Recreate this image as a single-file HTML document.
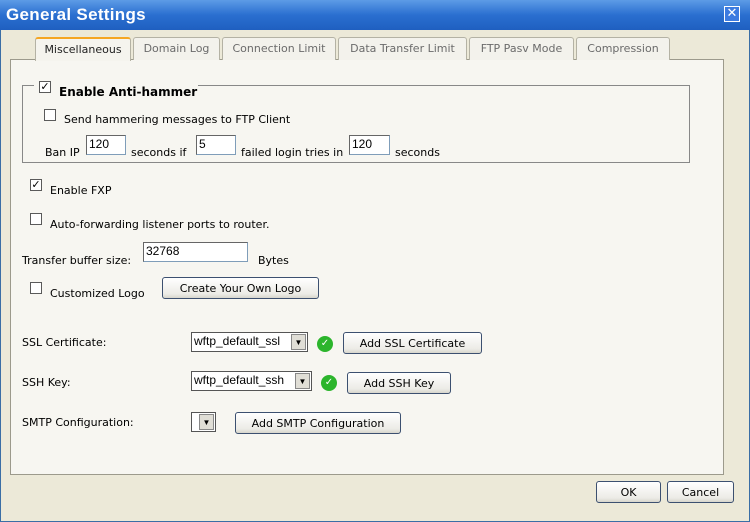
<!DOCTYPE html>
<html><head><style>
*{box-sizing:border-box;margin:0;padding:0}
body{width:750px;height:522px;background:#ece9d8;font-family:Tahoma,"DejaVu Sans",sans-serif;font-size:11px;color:#000;position:relative;overflow:hidden}
.a{position:absolute;white-space:nowrap}
#frame{position:absolute;left:0;top:0;width:750px;height:522px;border:1px solid #3a6ea5;background:#ece9d8}
#title{position:absolute;left:0;top:0;width:750px;height:30px;background:linear-gradient(#5d9be6,#2a6fd0 50%,#1f5fc0);color:#fff;font-weight:bold;font-size:17px;padding:5px 6px;font-family:"Liberation Sans",sans-serif;letter-spacing:0.3px}
#close{position:absolute;left:724px;top:6px;width:16px;height:16px;border:1px solid #fff;background:#3d7be0;color:#fff;font-size:13px;line-height:13px;text-align:center;font-weight:bold}
.tab{position:absolute;top:37px;height:23px;background:#f3f2ec;border:1px solid #b4b2a4;border-bottom:none;border-radius:3px 3px 0 0;color:#6b6b6b;text-align:center;line-height:21px}
.tab.on{background:#f5f4ee;border-top:2px solid #f5a623;color:#222;z-index:2;height:24px}
#panel{position:absolute;left:10px;top:59px;width:714px;height:416px;background:#f7f6f1;border:1px solid #9c9a8c}
.cb{position:absolute;width:12px;height:12px;border:1px solid #5a5a5a;background:#fff;font-size:11px;line-height:9px;text-align:center}
.in{position:absolute;height:20px;border:1px solid #7f9db9;background:#fff;border-top-color:#666;border-left-color:#666;padding:1px 2px;font-size:12px;font-family:"Liberation Sans",sans-serif}
.btn{position:absolute;height:22px;border:1px solid #3c5070;border-radius:3px;background:linear-gradient(#fff,#ecebe6 80%,#d8d6cc);text-align:center;line-height:21px;font-size:11px}
.sel{position:absolute;height:20px;border:1px solid #555;background:#fff;font-family:"Liberation Sans",sans-serif;font-size:12px;padding:1px 2px}
.sel i{position:absolute;right:1px;top:1px;width:15px;height:16px;background:#e0ded6;border:1px solid #888;font-style:normal;font-size:8px;text-align:center;line-height:15px}
.ok{position:absolute;width:16px;height:16px;border-radius:50%;background:#2cb52c;color:#fff;font-size:10px;text-align:center;line-height:16px;font-weight:bold}
</style></head><body>
<div id="frame"></div>
<div id="title">General Settings</div>
<div id="close">✕</div>
<div id="panel"></div>
<div class="tab on" style="left:35px;width:96px">Miscellaneous</div>
<div class="tab" style="left:133px;width:87px">Domain Log</div>
<div class="tab" style="left:222px;width:114px">Connection Limit</div>
<div class="tab" style="left:338px;width:129px">Data Transfer Limit</div>
<div class="tab" style="left:469px;width:105px">FTP Pasv Mode</div>
<div class="tab" style="left:576px;width:94px">Compression</div>

<div class="a" style="left:22px;top:85px;width:668px;height:78px;border:1px solid #888"></div>
<div class="a" style="left:34px;top:80px;width:164px;height:14px;background:#f7f6f1"></div>
<div class="cb" style="left:39px;top:81px">✓</div>
<div class="a" style="left:59px;top:85px;font-weight:bold;font-size:12px">Enable Anti-hammer</div>
<div class="cb" style="left:44px;top:109px"></div>
<div class="a" style="left:64px;top:113px">Send hammering messages to FTP Client</div>
<div class="a" style="left:45px;top:146px">Ban IP</div>
<div class="in" style="left:86px;top:135px;width:40px">120</div>
<div class="a" style="left:131px;top:146px">seconds if</div>
<div class="in" style="left:196px;top:135px;width:40px">5</div>
<div class="a" style="left:241px;top:146px">failed login tries in</div>
<div class="in" style="left:349px;top:135px;width:41px">120</div>
<div class="a" style="left:395px;top:146px">seconds</div>

<div class="cb" style="left:30px;top:179px">✓</div>
<div class="a" style="left:50px;top:184px">Enable FXP</div>
<div class="cb" style="left:30px;top:213px"></div>
<div class="a" style="left:50px;top:218px">Auto-forwarding listener ports to router.</div>
<div class="a" style="left:22px;top:254px">Transfer buffer size:</div>
<div class="in" style="left:143px;top:242px;width:105px">32768</div>
<div class="a" style="left:258px;top:254px">Bytes</div>
<div class="cb" style="left:30px;top:282px"></div>
<div class="a" style="left:50px;top:287px">Customized Logo</div>
<div class="btn" style="left:162px;top:277px;width:157px">Create Your Own Logo</div>

<div class="a" style="left:22px;top:336px">SSL Certificate:</div>
<div class="sel" style="left:191px;top:332px;width:117px">wftp_default_ssl<i>▼</i></div>
<div class="ok" style="left:317px;top:336px">✓</div>
<div class="btn" style="left:343px;top:332px;width:139px">Add SSL Certificate</div>
<div class="a" style="left:22px;top:376px">SSH Key:</div>
<div class="sel" style="left:191px;top:371px;width:121px">wftp_default_ssh<i>▼</i></div>
<div class="ok" style="left:321px;top:375px">✓</div>
<div class="btn" style="left:347px;top:372px;width:104px">Add SSH Key</div>
<div class="a" style="left:22px;top:416px">SMTP Configuration:</div>
<div class="sel" style="left:191px;top:412px;width:25px"><i>▼</i></div>
<div class="btn" style="left:235px;top:412px;width:166px">Add SMTP Configuration</div>

<div class="btn" style="left:596px;top:481px;width:65px">OK</div>
<div class="btn" style="left:667px;top:481px;width:67px">Cancel</div>
</body></html>
